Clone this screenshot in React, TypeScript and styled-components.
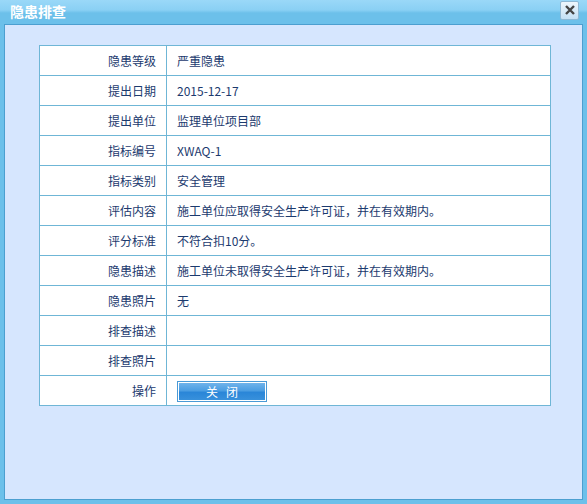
import React from "react";
import styled, { createGlobalStyle } from "styled-components";

const Global = createGlobalStyle`
  html, body { margin: 0; padding: 0; width: 587px; height: 504px; overflow: hidden; }
  body { font-family: "Noto Sans CJK SC", "Liberation Sans", sans-serif; }
`;

const Frame = styled.div`
  width: 587px;
  height: 504px;
  box-sizing: border-box;
  background: linear-gradient(#9ad8f8 0px, #8ad0f4 10px, #6cc0ea 13px, #6cc0ea 100%);
  padding: 0 4px 4px 4px;
  display: flex;
  flex-direction: column;
`;

const TitleBar = styled.div`
  height: 24px;
  flex: none;
  display: flex;
  align-items: center;
  justify-content: space-between;
  padding: 0 4px 0 6px;
`;

const Title = styled.div`
  color: #fff;
  font-size: 14px;
  font-weight: bold;
  line-height: 24px;
  margin-top: -2px;
`;

const CloseBtn = styled.div`
  width: 17px;
  height: 17px;
  margin-top: -4px;
  border: 1px solid #8fb8d4;
  border-radius: 2px;
  background: linear-gradient(#eef6fc, #c4e0f4);
  display: flex;
  align-items: center;
  justify-content: center;
`;

const Panel = styled.div`
  flex: 1;
  background: #d6e6fe;
  border: 1px solid #4c9fd0;
  padding: 20px 31px 0 34px;
`;

const Table = styled.table`
  border-collapse: collapse;
  width: 512px;
  background: #fff;
  & td {
    border: 1px solid #6fb6d6;
    height: 29px;
    padding: 0;
    font-size: 12px;
    color: #1c3a6e;
    line-height: 14px;
  }
`;

const LabelCell = styled.td`
  width: 116px;
  text-align: right;
  padding-right: 10px !important;
`;

const ValueCell = styled.td`
  padding-left: 10px !important;
`;

const Button = styled.button`
  width: 90px;
  height: 21px;
  border: 1px solid #4a9ad6;
  box-shadow: inset 0 0 0 1px #fff;
  background: linear-gradient(#74b6ec, #4c9ee2 45%, #2a86d8 55%, #3a92dc);
  color: #fff;
  font-family: "Noto Sans CJK SC", sans-serif;
  font-size: 12px;
  padding: 0;
  margin-top: 2px;
  display: block;
  letter-spacing: 8px;
  text-indent: 8px;
`;

const rows: [string, string][] = [
  ["隐患等级", "严重隐患"],
  ["提出日期", "2015-12-17"],
  ["提出单位", "监理单位项目部"],
  ["指标编号", "XWAQ-1"],
  ["指标类别", "安全管理"],
  ["评估内容", "施工单位应取得安全生产许可证，并在有效期内。"],
  ["评分标准", "不符合扣10分。"],
  ["隐患描述", "施工单位未取得安全生产许可证，并在有效期内。"],
  ["隐患照片", "无"],
  ["排查描述", ""],
  ["排查照片", ""],
];

export default function App() {
  return (
    <>
      <Global />
      <Frame>
        <TitleBar>
          <Title>隐患排查</Title>
          <CloseBtn>
            <svg width="12" height="12" viewBox="0 0 12 12">
              <path d="M2 2 L10 10 M10 2 L2 10" stroke="#444" strokeWidth="2.4" />
            </svg>
          </CloseBtn>
        </TitleBar>
        <Panel>
          <Table>
            <tbody>
              {rows.map(([k, v]) => (
                <tr key={k}>
                  <LabelCell>{k}</LabelCell>
                  <ValueCell>{v}</ValueCell>
                </tr>
              ))}
              <tr>
                <LabelCell>操作</LabelCell>
                <ValueCell>
                  <Button>关闭</Button>
                </ValueCell>
              </tr>
            </tbody>
          </Table>
        </Panel>
      </Frame>
    </>
  );
}
